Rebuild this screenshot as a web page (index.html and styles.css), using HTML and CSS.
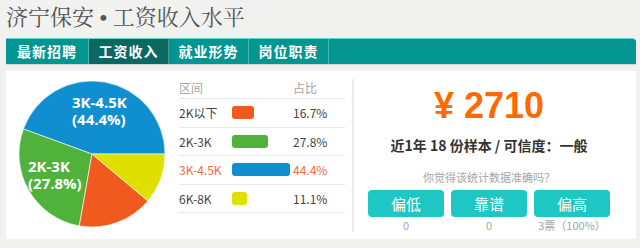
FILE: index.html
```html
<!DOCTYPE html>
<html lang="zh-CN">
<head>
    <meta charset="UTF-8">
    <title>济宁保安 • 工资收入水平</title>
    <link rel="stylesheet" href="styles.css">
</head>
<body>

    <h1 class="title">济宁保安<span class="dot"> • </span>工资收入水平</h1>

    <!-- 标签栏 -->
    <div class="tabs">
        <a class="tab">最新招聘</a>
        <a class="tab active">工资收入</a>
        <a class="tab">就业形势</a>
        <a class="tab">岗位职责</a>
    </div>

    <div class="panel">
        <div class="chart">
            <svg class="pie" width="170" height="168" viewBox="0 0 170 168">
                <path d="M86,83 L159,83 A73,73 0 0 0 17.4,58 Z" fill="#0f8fd0" stroke="#fff" stroke-width="0.6"/>
                <path d="M86,83 L17.4,58 A73,73 0 0 0 73.3,154.9 Z" fill="#50b23a" stroke="#fff" stroke-width="0.6"/>
                <path d="M86,83 L73.3,154.9 A73,73 0 0 0 141.9,129.9 Z" fill="#f05a1e" stroke="#fff" stroke-width="0.6"/>
                <path d="M86,83 L141.9,129.9 A73,73 0 0 0 159,83 Z" fill="#dfe000" stroke="#fff" stroke-width="0.6"/>
                <text class="pie-label" x="66" y="37">3K-4.5K</text>
                <text class="pie-label" x="66" y="54">(44.4%)</text>
                <text class="pie-label" x="22" y="101">2K-3K</text>
                <text class="pie-label" x="22" y="118">(27.8%)</text>
            </svg>

            <div class="table">
                <div class="row head">
                    <span>区间</span>
                    <span></span>
                    <span>占比</span>
                </div>
                <div class="row">
                    <span>2K以下</span>
                    <span><i class="bar orange" style="width: 22px"></i></span>
                    <span>16.7%</span>
                </div>
                <div class="row">
                    <span>2K-3K</span>
                    <span><i class="bar green" style="width: 36px"></i></span>
                    <span>27.8%</span>
                </div>
                <div class="row current">
                    <span>3K-4.5K</span>
                    <span><i class="bar blue" style="width: 58px"></i></span>
                    <span>44.4%</span>
                </div>
                <div class="row">
                    <span>6K-8K</span>
                    <span><i class="bar yellow" style="width: 15px"></i></span>
                    <span>11.1%</span>
                </div>
            </div>
        </div>

        <div class="divider"></div>

        <div class="summary">
            <div class="price">¥ 2710</div>
            <div class="sample">近1年 18 份样本 / 可信度：一般</div>
            <div class="question">你觉得该统计数据准确吗？</div>
            <div class="votes">
                <div class="vote">
                    <button class="vote-btn">偏低</button>
                    <span class="count">0</span>
                </div>
                <div class="vote">
                    <button class="vote-btn">靠谱</button>
                    <span class="count">0</span>
                </div>
                <div class="vote">
                    <button class="vote-btn">偏高</button>
                    <span class="count">3票（100%）</span>
                </div>
            </div>
        </div>
    </div>

</body>
</html>
```

FILE: styles.css
```css
:root {
    --page-background: #f1f1ef;
    --tab-background: #03958f;
    --tab-active: #0b6762;
    --text-color: #444;
    --muted-color: #a5a5a5;
    --line-color: #e8e8e8;
    --price-color: #ff6a00;
    --button-background: #1ec6c4;
}

body {
    margin: 0;
    background-color: var(--page-background);
    font-family: "Noto Sans CJK SC", "Noto Sans", sans-serif;
    color: var(--text-color);
}

.title {
    margin: 4px 0 8px 6px;
    font-family: "Noto Serif CJK SC", "Noto Sans CJK SC", serif;
    font-size: 22px;
    line-height: 24px;
    font-weight: normal;
    color: #555;
}

.title .dot {
    font-family: "Liberation Serif", serif;
    font-weight: bold;
    white-space: pre;
}

/* Barra de abas */
.tabs {
    display: flex;
    height: 26px;
    margin: 0 4px 0 6px;
    box-sizing: border-box;
    background-color: var(--tab-background);
    border-top: 1px solid #5fd3d0;
    border-radius: 0 4px 0 0;
    box-shadow: 0 1px 1px rgba(0, 0, 0, 0.12);
}

.tab {
    width: 83px;
    box-sizing: border-box;
    border-right: 1px solid rgba(255, 255, 255, 0.3);
    color: #fff;
    font-size: 14px;
    font-weight: bold;
    line-height: 25px;
    text-align: center;
    letter-spacing: 1px;
}

.tab + .tab {
    width: 80px;
}

.tab.active {
    background-color: var(--tab-active);
}

.panel {
    display: flex;
    height: 168px;
    margin: 7px 4px 0 6px;
    background-color: #fff;
}

.chart {
    display: flex;
}

.pie {
    display: block;
}

.pie-label {
    font-family: "Open Sans", sans-serif;
    font-size: 15px;
    font-weight: bold;
    fill: #fff;
}

.table {
    width: 166px;
    margin-left: 3px;
    padding-top: 5px;
    font-size: 12px;
}

.row {
    display: grid;
    grid-template-columns: 53px 61px 1fr;
    align-items: center;
    height: 28.5px;
    box-sizing: border-box;
    border-bottom: 1px solid var(--line-color);
}

.row.head {
    height: 23px;
    color: var(--muted-color);
}

.row.current {
    color: #f26b3a;
}

.bar {
    display: block;
    height: 13px;
    border-radius: 3px;
}

.orange { background-color: #f05a1e; }
.green { background-color: #50b23a; }
.blue { background-color: #0f8fd0; }
.yellow { background-color: #dfe000; }

.divider {
    width: 2px;
    margin: 8px 0 7px 7px;
    background-color: #ececec;
}

.summary {
    flex: 1;
    padding-right: 12px;
    display: flex;
    flex-direction: column;
    align-items: center;
}

.price {
    margin-top: 15px;
    font-family: "Liberation Sans", Arial, sans-serif;
    font-size: 36px;
    line-height: 40px;
    font-weight: bold;
    color: var(--price-color);
}

.sample {
    margin-top: 9px;
    font-size: 14px;
    line-height: 20px;
    font-weight: bold;
    color: #333;
}

.question {
    margin-top: 14px;
    font-size: 11px;
    line-height: 16px;
    color: var(--muted-color);
}

.votes {
    display: flex;
    gap: 7px;
    margin-top: 5px;
}

.vote {
    display: flex;
    flex-direction: column;
    align-items: center;
}

.vote-btn {
    width: 76px;
    height: 27px;
    padding: 0;
    border: none;
    border-radius: 4px;
    background-color: var(--button-background);
    color: #fff;
    font-family: inherit;
    font-size: 15px;
    cursor: pointer;
}

.count {
    margin-top: 1px;
    font-size: 11px;
    line-height: 14px;
    color: var(--muted-color);
}
```
